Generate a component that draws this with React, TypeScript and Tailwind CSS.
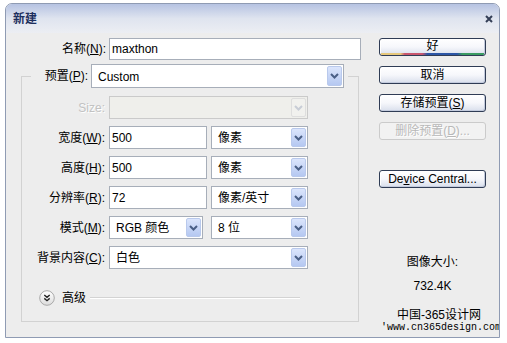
import React from 'react'

const font = "font-['Liberation_Sans','Noto_Sans_CJK_SC',sans-serif]"

function Chevron({ disabled }: { disabled?: boolean }) {
  return (
    <svg width="9" height="6" viewBox="0 0 9 6">
      <path d="M1 1 L4.5 4.5 L8 1" fill="none" stroke={disabled ? '#c8cdd6' : '#4a5f86'} strokeWidth="2" />
    </svg>
  )
}

function Select({ w, h = 'h-[23px]', value, disabled }: { w: string; h?: string; value?: string; disabled?: boolean }) {
  return (
    <div
      className={`flex ${w} ${h} items-center border ${
        disabled ? 'border-[#cacaca] bg-[#efefeb]' : 'border-[#a7aeb9] bg-white'
      }`}
    >
      <span className="flex-1 truncate pl-[6px] pt-[1px] text-[12px] leading-none text-black">{value}</span>
      <span
        className={`mr-[1px] flex h-[calc(100%-2px)] w-[15px] items-center justify-center rounded-[2px] border ${
          disabled
            ? 'border-[#dedede] bg-[#f1f1ee]'
            : 'border-[#b9c9ec] bg-linear-to-b from-[#dbe5fc] to-[#b5c8f1]'
        }`}
      >
        <Chevron disabled={disabled} />
      </span>
    </div>
  )
}

function Input({ w, h = 'h-[23px]', value }: { w: string; h?: string; value: string }) {
  return (
    <div className={`flex ${w} ${h} items-center border border-[#a7aeb9] bg-white pl-[2px] text-[12px] leading-none`}>
      {value}
    </div>
  )
}

function Label({ w, children, disabled }: { w: string; children: React.ReactNode; disabled?: boolean }) {
  return (
    <span
      className={`${w} shrink-0 text-right text-[12px] leading-none ${
        disabled ? 'text-[#c2c2c2] [text-shadow:1px_1px_0_#fff]' : 'text-black'
      }`}
    >
      {children}
    </span>
  )
}

function Button({ children, primary, disabled }: { children: React.ReactNode; primary?: boolean; disabled?: boolean }) {
  return (
    <div
      className={`flex h-[18px] w-[107px] flex-col overflow-hidden rounded-[3px] border ${
        disabled
          ? 'border-[#cbcbcb] bg-[#f2f2f2] text-[#b8b8b8] [text-shadow:1px_1px_0_#fff]'
          : 'border-[#2f3c55] bg-linear-to-b from-white via-[#f6f7fb] to-[#d9dfec] text-black shadow-[inset_-1px_-1px_0_#c3cbdd,inset_1px_1px_0_#fff]'
      }`}
    >
      <span className="flex flex-1 items-center justify-center text-[12px] leading-none">{children}</span>
      {primary && (
        <span className="mx-[1px] h-[2px] bg-[linear-gradient(to_right,#e6c87c_0%,#e6c87c_19%,#c9566e_23%,#c9566e_40%,#2c56a6_45%,#2c56a6_74%,#3b9c63_79%,#3b9c63_100%)]" />
      )}
    </div>
  )
}

export default function App() {
  return (
    <div className={`h-[343px] w-[507px] bg-white pl-[5px] pt-[3px] ${font}`}>
      <div className="flex h-[335px] w-[495px] flex-col overflow-hidden rounded-t-[7px] border border-[#8f9bb3] bg-[#ededed]">
        {/* title bar */}
        <div className="flex h-[29px] shrink-0 items-center justify-between bg-linear-to-b from-[#b6c3e2] via-[#dfe4ef] to-[#eceef3] pl-[7px] pr-[6px]">
          <span className="text-[12px] font-bold leading-none text-[#1d2f5e]">新建</span>
          <svg width="8" height="8" viewBox="0 0 8 8">
            <path d="M1 1 L7 7 M7 1 L1 7" stroke="#343f57" strokeWidth="2" />
          </svg>
        </div>

        <div className="flex flex-1">
          {/* left */}
          <div className="flex w-[355px] shrink-0 flex-col pt-[5px]">
            <div className="flex items-center">
              <Label w="w-[100px]">
                名称(<u>N</u>):
              </Label>
              <span className="w-[3px]" />
              <Input w="w-[252px]" h="h-[22px]" value="maxthon" />
            </div>

            <fieldset className="ml-[15px] mt-[4px] w-[338px] border border-[#d2d2d2] pb-[15px]">
              <legend className="ml-[9px] pr-[4px]">
                <div className="flex items-center">
                  <Label w="w-[57px]">
                    预置(<u>P</u>):
                  </Label>
                  <span className="w-[3px]" />
                  <Select w="w-[253px]" h="h-[24px]" value="Custom" />
                </div>
              </legend>

              <div className="flex flex-col gap-[7px] pt-[8px]">
                <div className="flex items-center gap-[4px]">
                  <Label w="w-[83px]" disabled>
                    Size:
                  </Label>
                  <Select w="w-[199px]" disabled />
                </div>
                <div className="flex items-center gap-[4px]">
                  <Label w="w-[83px]">
                    宽度(<u>W</u>):
                  </Label>
                  <Input w="w-[98px]" value="500" />
                  <Select w="w-[97px]" value="像素" />
                </div>
                <div className="flex items-center gap-[4px]">
                  <Label w="w-[83px]">
                    高度(<u>H</u>):
                  </Label>
                  <Input w="w-[98px]" value="500" />
                  <Select w="w-[97px]" value="像素" />
                </div>
                <div className="flex items-center gap-[4px]">
                  <Label w="w-[83px]">
                    分辨率(<u>R</u>):
                  </Label>
                  <Input w="w-[98px]" value="72" />
                  <Select w="w-[97px]" value="像素/英寸" />
                </div>
                <div className="flex items-center gap-[4px]">
                  <Label w="w-[83px]">
                    模式(<u>M</u>):
                  </Label>
                  <Select w="w-[94px]" value="RGB 颜色" />
                  <div className="ml-[4px]">
                    <Select w="w-[97px]" value="8 位" />
                  </div>
                </div>
                <div className="flex items-center gap-[4px]">
                  <Label w="w-[83px]">
                    背景内容(<u>C</u>):
                  </Label>
                  <Select w="w-[199px]" value="白色" />
                </div>
              </div>

              <div className="ml-[17px] mt-[21px] flex h-[16px] items-center">
                <svg width="16" height="16" viewBox="0 0 16 16">
                  <defs>
                    <linearGradient id="adv" x1="0" y1="0" x2="0" y2="1">
                      <stop offset="0" stopColor="#ffffff" />
                      <stop offset="1" stopColor="#dcdcdc" />
                    </linearGradient>
                  </defs>
                  <circle cx="8" cy="8" r="7.3" fill="url(#adv)" stroke="#a9a9a9" />
                  <path d="M5.3 5 L8 7.3 L10.7 5 M5.3 8.4 L8 10.7 L10.7 8.4" fill="none" stroke="#222" strokeWidth="1.4" />
                </svg>
                <span className="ml-[7px] text-[12px] leading-none">高级</span>
                <span className="ml-[4px] h-[2px] w-[210px] border-t border-b border-t-[#d3d3d3] border-b-white" />
              </div>
            </fieldset>
          </div>

          {/* right */}
          <div className="ml-[18px] flex w-[107px] flex-col pt-[5px]">
            <Button primary>好</Button>
            <div className="mt-[10px]">
              <Button>取消</Button>
            </div>
            <div className="mt-[10px]">
              <Button>
                存储预置(<u>S</u>)
              </Button>
            </div>
            <div className="mt-[10px]">
              <Button disabled>
                删除预置(<u>D</u>)...
              </Button>
            </div>
            <div className="mt-[30px]">
              <Button>
                De<u>v</u>ice Central...
              </Button>
            </div>
            <div className="mt-[66px] text-center text-[12px] leading-[16px]">图像大小:</div>
            <div className="mt-[8px] text-center text-[12px] leading-[16px]">732.4K</div>
            <div className="ml-[18px] mt-[14px] whitespace-nowrap text-[12px] leading-[14px]">中国-365设计网</div>
            <div className="ml-[2px] whitespace-nowrap font-['Liberation_Mono',monospace] text-[10px] leading-[12px]">
              'www.cn365design.com
            </div>
          </div>
        </div>
      </div>
    </div>
  )
}
